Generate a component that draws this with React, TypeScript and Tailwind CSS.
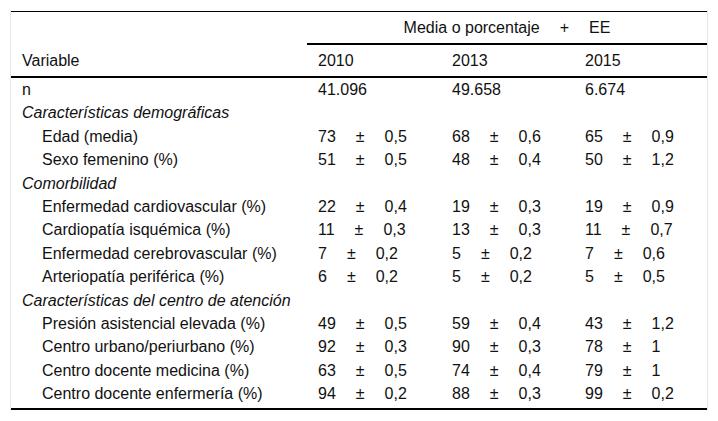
const years = ["2010", "2013", "2015"];

type Row =
  | { kind: "section"; label: string }
  | { kind: "n"; label: string; values: string[] }
  | { kind: "item"; label: string; values: [string, string][] };

const rows: Row[] = [
  { kind: "n", label: "n", values: ["41.096", "49.658", "6.674"] },
  { kind: "section", label: "Características demográficas" },
  { kind: "item", label: "Edad (media)", values: [["73", "0,5"], ["68", "0,6"], ["65", "0,9"]] },
  { kind: "item", label: "Sexo femenino (%)", values: [["51", "0,5"], ["48", "0,4"], ["50", "1,2"]] },
  { kind: "section", label: "Comorbilidad" },
  { kind: "item", label: "Enfermedad cardiovascular (%)", values: [["22", "0,4"], ["19", "0,3"], ["19", "0,9"]] },
  { kind: "item", label: "Cardiopatía isquémica (%)", values: [["11", "0,3"], ["13", "0,3"], ["11", "0,7"]] },
  { kind: "item", label: "Enfermedad cerebrovascular (%)", values: [["7", "0,2"], ["5", "0,2"], ["7", "0,6"]] },
  { kind: "item", label: "Arteriopatía periférica (%)", values: [["6", "0,2"], ["5", "0,2"], ["5", "0,5"]] },
  { kind: "section", label: "Características del centro de atención" },
  { kind: "item", label: "Presión asistencial elevada (%)", values: [["49", "0,5"], ["59", "0,4"], ["43", "1,2"]] },
  { kind: "item", label: "Centro urbano/periurbano (%)", values: [["92", "0,3"], ["90", "0,3"], ["78", "1"]] },
  { kind: "item", label: "Centro docente medicina (%)", values: [["63", "0,5"], ["74", "0,4"], ["79", "1"]] },
  { kind: "item", label: "Centro docente enfermería (%)", values: [["94", "0,2"], ["88", "0,3"], ["99", "0,2"]] },
];

const grid = "grid grid-cols-[296px_134px_133px_133px]";

export default function App() {
  return (
    <div className="min-h-[421px] bg-white pt-[10px] pl-[10px] text-[16px] text-[#111] font-['Liberation_Sans',Arial,sans-serif]">
      <div className="w-[698px] border-x border-[#e6e6e6] pt-[1px]">
        <div className="border-t border-b-2 border-black pb-[3px]">
          {/* header */}
          <div className={grid}>
            <div />
            <div className="col-span-3 h-[33px] border-b-2 border-black flex items-center justify-center gap-[20px]">
              <span>Media o porcentaje</span>
              <span>+</span>
              <span>EE</span>
            </div>
          </div>
          <div className={`${grid} h-[33px] border-b-2 border-black items-center`}>
            <div className="pl-[11px]">Variable</div>
            {years.map((y) => (
              <div key={y} className="pl-[11px]">
                {y}
              </div>
            ))}
          </div>

          {/* body */}
          {rows.map((row, i) => (
            <div key={i} className={`${grid} h-[23.4px] items-center whitespace-nowrap`}>
              {row.kind === "section" ? (
                <div className="col-span-4 pl-[11px] italic">{row.label}</div>
              ) : (
                <>
                  <div className={row.kind === "n" ? "pl-[11px]" : "pl-[31px]"}>{row.label}</div>
                  {row.kind === "n"
                    ? row.values.map((v, j) => (
                        <div key={j} className="pl-[11px]">
                          {v}
                        </div>
                      ))
                    : row.values.map(([v, ee], j) => (
                        <div key={j} className="pl-[11px] flex gap-[20px]">
                          <span>{v}</span>
                          <span>±</span>
                          <span>{ee}</span>
                        </div>
                      ))}
                </>
              )}
            </div>
          ))}
        </div>
      </div>
    </div>
  );
}
